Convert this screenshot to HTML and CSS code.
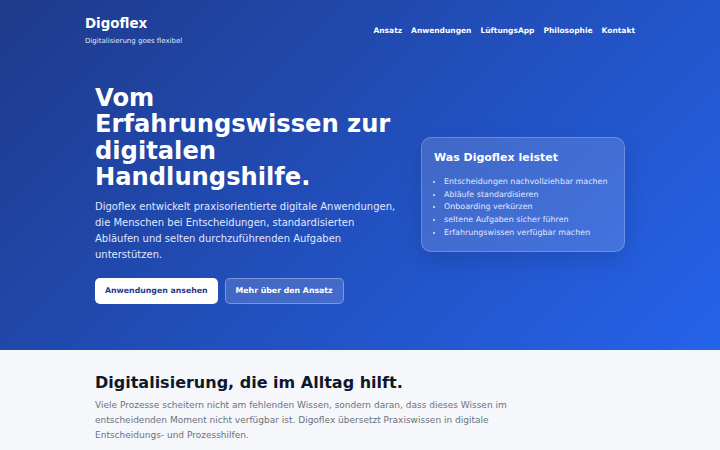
FILE: index.html
```html
<!DOCTYPE html>
<html lang="de">
<head>
<meta charset="utf-8">
<title>Digoflex</title>
<link rel="stylesheet" href="styles.css">
</head>
<body>
<div class="hero">
  <header class="header">
    <div class="brand">
      <div class="logo">Digoflex</div>
      <div class="tagline">Digitalisierung goes flexibel</div>
    </div>
    <nav class="nav">
      <a href="#">Ansatz</a>
      <a href="#">Anwendungen</a>
      <a href="#">LüftungsApp</a>
      <a href="#">Philosophie</a>
      <a href="#">Kontakt</a>
    </nav>
  </header>
  <section class="hero-main">
    <div class="hero-text">
      <h1>Vom Erfahrungswissen zur digitalen Handlungshilfe.</h1>
      <p>Digoflex entwickelt praxisorientierte digitale Anwendungen, die Menschen bei Entscheidungen, standardisierten Abläufen und selten durchzuführenden Aufgaben unterstützen.</p>
      <div class="buttons">
        <a class="btn btn-primary" href="#">Anwendungen ansehen</a>
        <a class="btn btn-secondary" href="#">Mehr über den Ansatz</a>
      </div>
    </div>
    <div class="card">
      <h2>Was Digoflex leistet</h2>
      <ul>
        <li>Entscheidungen nachvollziehbar machen</li>
        <li>Abläufe standardisieren</li>
        <li>Onboarding verkürzen</li>
        <li>seltene Aufgaben sicher führen</li>
        <li>Erfahrungswissen verfügbar machen</li>
      </ul>
    </div>
  </section>
</div>
<section class="intro">
  <h2>Digitalisierung, die im Alltag hilft.</h2>
  <p>Viele Prozesse scheitern nicht am fehlenden Wissen, sondern daran, dass dieses Wissen im entscheidenden Moment nicht verfügbar ist. Digoflex übersetzt Praxiswissen in digitale Entscheidungs- und Prozesshilfen.</p>
</section>
</body>
</html>
```
FILE: styles.css
```css
* { box-sizing: border-box; }
html, body { margin: 0; padding: 0; }
body {
  font-family: "DejaVu Sans", sans-serif;
  background: #f5f7fa;
  color: #111827;
}
.hero {
  background: linear-gradient(135deg, #1e3a8a 0%, #2563eb 100%);
  color: #fff;
  height: 350px;
}
.header {
  width: 550px;
  margin: 0 auto;
  padding-top: 15px;
  display: flex;
  justify-content: space-between;
  align-items: flex-start;
}
.logo {
  font-size: 13.4px;
  font-weight: bold;
  line-height: 17px;
}
.tagline {
  font-size: 7px;
  line-height: 9px;
  color: #dbeafe;
  margin-top: 5px;
}
.nav {
  display: flex;
  gap: 9px;
  margin-top: 10px;
}
.nav a {
  color: #fff;
  text-decoration: none;
  font-weight: bold;
  font-size: 7.5px;
  line-height: 12px;
}
.hero-main {
  width: 530px;
  margin: 0 auto;
  padding-top: 39px;
  display: flex;
  justify-content: space-between;
  align-items: center;
}
.hero-text { width: 302px; }
h1 {
  margin: 0;
  font-size: 24.2px;
  line-height: 26.4px;
  font-weight: bold;
}
.hero-text p {
  margin: 8.5px 0 0;
  font-size: 10px;
  line-height: 16px;
  color: #e0e7ff;
}
.buttons {
  display: flex;
  gap: 7px;
  margin-top: 15px;
}
.btn {
  display: inline-block;
  height: 26px;
  line-height: 24px;
  padding: 0 9px;
  border-radius: 5px;
  font-size: 7.8px;
  font-weight: bold;
  text-decoration: none;
  border: 1px solid transparent;
}
.btn-primary {
  background: #fff;
  color: #1e3a8a;
}
.btn-secondary {
  padding: 0 10px;
  background: rgba(255,255,255,0.15);
  border-color: rgba(255,255,255,0.3);
  color: #fff;
}
.card {
  width: 204px;
  padding: 13px 12px 11.6px 12px;
  background: rgba(255,255,255,0.14);
  border: 1px solid rgba(255,255,255,0.22);
  border-radius: 10px;
  box-shadow: 0 8px 20px rgba(15,23,42,0.15);
}
.card h2 {
  margin: 0;
  font-size: 11px;
  line-height: 14px;
  font-weight: bold;
}
.card ul {
  margin: 10.6px 0 0;
  padding-left: 10px;
  font-size: 7.95px;
  line-height: 12.7px;
  color: #e0e7ff;
}
.intro {
  width: 530px;
  margin: 0 auto;
  padding-top: 22px;
}
.intro h2 {
  margin: 0;
  font-size: 16px;
  line-height: 22px;
  font-weight: bold;
  color: #0f172a;
}
.intro p {
  margin: 4px 0 0;
  font-size: 9px;
  line-height: 15px;
  color: #6b7280;
  width: 430px;
}
```
